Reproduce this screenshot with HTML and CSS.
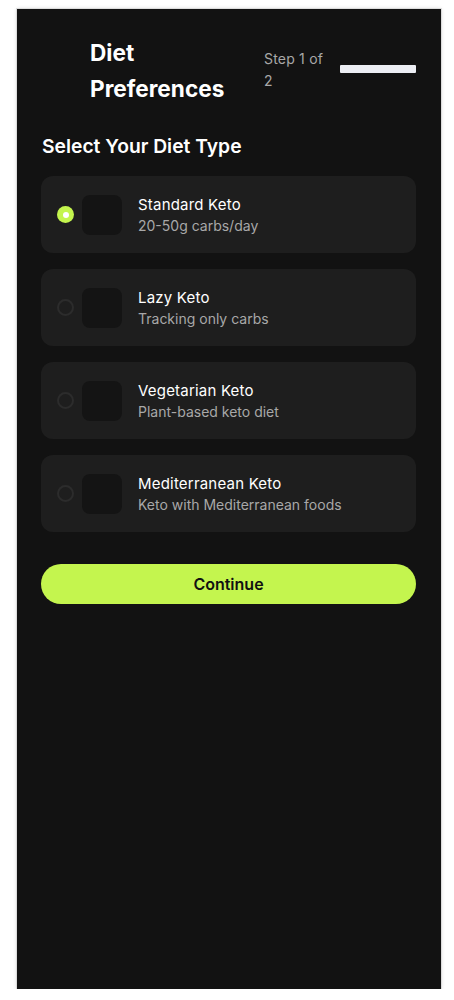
FILE: index.html
```html
<!DOCTYPE html>
<html lang="en">
<head>
<meta charset="utf-8">
<title>Diet Preferences</title>
<link rel="stylesheet" href="styles.css">
</head>
<body>
<div class="screen">
  <header class="header">
    <div class="back"></div>
    <h1 class="title">Diet Preferences</h1>
    <div class="step">Step 1 of 2</div>
    <div class="progress"><div class="progress-fill"></div></div>
  </header>

  <h2 class="section-title">Select Your Diet Type</h2>

  <div class="options">
    <div class="card">
      <span class="radio radio-on"></span>
      <span class="icon"></span>
      <div class="text">
        <div class="name">Standard Keto</div>
        <div class="desc">20-50g carbs/day</div>
      </div>
    </div>
    <div class="card">
      <span class="radio"></span>
      <span class="icon"></span>
      <div class="text">
        <div class="name">Lazy Keto</div>
        <div class="desc">Tracking only carbs</div>
      </div>
    </div>
    <div class="card">
      <span class="radio"></span>
      <span class="icon"></span>
      <div class="text">
        <div class="name">Vegetarian Keto</div>
        <div class="desc">Plant-based keto diet</div>
      </div>
    </div>
    <div class="card">
      <span class="radio"></span>
      <span class="icon"></span>
      <div class="text">
        <div class="name">Mediterranean Keto</div>
        <div class="desc">Keto with Mediterranean foods</div>
      </div>
    </div>
  </div>

  <button class="continue">Continue</button>
</div>
</body>
</html>
```

FILE: styles.css
```css
* { box-sizing: border-box; }

html, body {
  margin: 0;
  padding: 0;
  background: #ffffff;
}

body {
  font-family: Inter, "Noto Sans", "Liberation Sans", sans-serif;
  color: #ffffff;
}

.screen {
  margin: 9px 0 0 17px;
  width: 424px;
  height: 980px;
  background: #121212;
  padding: 26px 25px 24px 24px;
  box-shadow: 0 0 0 1px #dcdcdc, 0 0 4px rgba(0, 0, 0, 0.18);
}

.header {
  display: flex;
  align-items: center;
}

.back {
  width: 40px;
  height: 40px;
  flex: none;
  margin-right: 9px;
}

.title {
  flex: 1;
  margin: 0 16px 0 0;
  font-size: 22.6px;
  font-weight: 700;
  line-height: 36px;
  color: #ffffff;
}

.step {
  width: 60px;
  flex: none;
  margin-bottom: 2px;
  font-size: 14px;
  letter-spacing: 0.2px;
  line-height: 22px;
  color: #a8a8a8;
}

.progress {
  width: 76px;
  height: 8px;
  flex: none;
  margin-left: 16px;
  margin-bottom: 4px;
  background: #3a3a3a;
  border-radius: 1px;
  overflow: hidden;
}

.progress-fill {
  width: 100%;
  height: 100%;
  background: #eceef4;
}

.section-title {
  margin: 25px 0 16px 1px;
  font-size: 19.3px;
  font-weight: 600;
  line-height: 28px;
  color: #ffffff;
}

.options {
  display: flex;
  flex-direction: column;
  gap: 16px;
}

.card {
  height: 77px;
  display: flex;
  align-items: center;
  padding: 0 16px;
  background: #1e1e1e;
  border-radius: 12px;
}

.radio {
  width: 17px;
  height: 17px;
  flex: none;
  border-radius: 50%;
  border: 2px solid #2c2c2c;
  margin-right: 8px;
}

.radio-on {
  border: none;
  background: #c4f54e;
  display: flex;
  align-items: center;
  justify-content: center;
}

.radio-on::after {
  content: "";
  width: 6px;
  height: 6px;
  border-radius: 50%;
  background: #ffffff;
}

.icon {
  width: 40px;
  height: 40px;
  flex: none;
  border-radius: 8px;
  background: #141414;
  margin-right: 16px;
}

.text {
  display: flex;
  flex-direction: column;
  padding-top: 1px;
}

.name {
  font-size: 15px;
  letter-spacing: 0.2px;
  line-height: 22px;
  color: #ffffff;
}

.desc {
  font-size: 14px;
  line-height: 20px;
  color: #a8a8a8;
}

.continue {
  display: block;
  width: 100%;
  height: 40px;
  margin-top: 32px;
  border: none;
  border-radius: 20px;
  background: #c4f54e;
  color: #111111;
  font-family: Inter, "Noto Sans", "Liberation Sans", sans-serif;
  font-size: 16px;
  font-weight: 600;
  cursor: pointer;
}
```
